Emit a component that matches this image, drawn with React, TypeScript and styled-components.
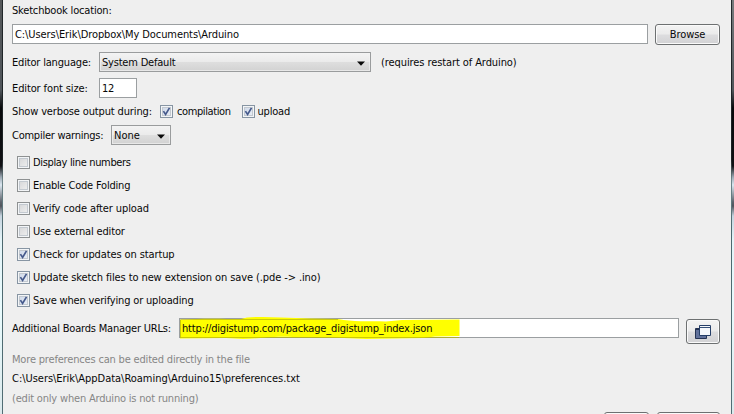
import React from 'react';
import styled, { createGlobalStyle } from 'styled-components';

const GlobalStyle = createGlobalStyle`
  *, *::before, *::after { box-sizing: border-box; }
  body { margin: 0; overflow: hidden; background: #efefef; }
`;

const Frame = styled.div`
  display: grid;
  grid-template-columns: 3px 1fr 3px;
  width: 734px;
  height: 414px;
  overflow: hidden;
  font: 11px/14px "DejaVu Sans Condensed", "DejaVu Sans", Tahoma, sans-serif;
  color: #080808;
`;

const glass = (top: string) => `linear-gradient(180deg,
  ${top} 0, #50555a 90px, #08090b 108px, #101114 166px,
  #9ba7b2 177px, #dce7f0 185px, #5c626b 202px, #50545c 206px,
  #c6d4df 216px, #e4f4f8 240px, #e9fbfd 310px, #dce9ec 414px)`;

const WindowEdge = styled.div<{ $side: 'left' | 'right' }>`
  background: ${(p) => glass(p.$side === 'left' ? '#55585a' : '#777b7d')};
  ${(p) => (p.$side === 'left' ? 'border-right' : 'border-left')}: 1px solid;
  border-image: linear-gradient(#22282b, #1b2022 160px, #6f858a 180px, #4c686e 230px, #526e75) 1;
  border-top: 0;
  border-bottom: 0;
`;

const Panel = styled.main`
  display: flex;
  flex-direction: column;
  min-width: 0;
  background: #efefef;
  padding: 0 11px 0 9px;
`;

const Row = styled.div<{ $height: number; $gap?: number }>`
  display: flex;
  flex: none;
  align-items: center;
  height: ${(p) => p.$height}px;
  gap: ${(p) => p.$gap ?? 0}px;
`;

const Text = styled.span<{ $track?: number; $muted?: boolean }>`
  flex: none;
  padding-top: 1px;
  white-space: pre;
  letter-spacing: ${(p) => p.$track ?? 0}px;
  color: ${(p) => (p.$muted ? '#868686' : 'inherit')};
`;

const Caption = styled(Text)<{ $width: number }>`
  width: ${(p) => p.$width}px;
`;

const Field = styled.div<{ $width: number }>`
  display: flex;
  flex: none;
  align-items: center;
  width: ${(p) => p.$width}px;
  height: 20px;
  padding-left: 2px;
  border: 1px solid #9b9fa1;
  background: #fff;
`;

const Select = styled.div<{ $width: number }>`
  display: flex;
  flex: none;
  align-items: center;
  justify-content: space-between;
  width: ${(p) => p.$width}px;
  height: 20px;
  padding: 0 5px 0 2px;
  border: 1px solid #9a9c9d;
  background: linear-gradient(#f3f3f3, #ebebeb 48%, #dedede 52%, #d2d2d2);
  box-shadow: inset 0 0 0 1px #f3f3f3aa;
  & > svg { margin-top: 3px; }
`;

const Button = styled.div<{ $width: number; $height: number }>`
  display: flex;
  flex: none;
  align-items: center;
  justify-content: center;
  width: ${(p) => p.$width}px;
  height: ${(p) => p.$height}px;
  border: 1px solid #6d7071;
  border-radius: 3px;
  background: linear-gradient(#f3f3f3, #ebebeb 48%, #dddddf 52%, #d2d2d4);
  box-shadow: inset 0 0 0 1px #fafafa;
`;

const Check = styled.label<{ $gap?: number }>`
  display: flex;
  align-items: center;
  gap: ${(p) => p.$gap ?? 3}px;
`;

const Box = styled.span<{ $checked: boolean }>`
  display: flex;
  flex: none;
  width: 13px;
  height: 13px;
  border: 1px solid ${(p) => (p.$checked ? '#8795a3' : '#8e9192')};
  box-shadow: inset 0 0 0 1px #f3f5f7, inset 0 0 0 2px #c3c9d0;
  background: ${(p) =>
    p.$checked
      ? 'linear-gradient(135deg, #cbd6e8, #edf1f7)'
      : 'linear-gradient(135deg, #d2d3d5, #f2f2f2)'};
`;

const CheckList = styled.div`
  display: flex;
  flex-direction: column;
  margin-top: 4px;
  padding-left: 5px;
`;

const UrlRow = styled.div`
  display: flex;
  flex: none;
  height: 37px;
  padding-top: 6px;
  & > ${Caption} { padding-top: 4px; }
`;

const UrlField = styled(Field)`
  position: relative;
  margin-right: 7px;
`;

const Marker = styled.svg`
  position: absolute;
  left: -2px;
  top: -3px;
  overflow: visible;
`;

const UrlText = styled(Text)`
  z-index: 1;
`;

const IconButton = styled(Button)`
  margin-top: 1px;
`;

const Note = styled(Text)`
  padding-left: 10px;
`;

const Footer = styled.div`
  display: flex;
  justify-content: flex-end;
  gap: 8px;
  margin-top: 4px;
  flex: none;
`;

const Arrow = () => (
  <svg width="8" height="5" viewBox="0 0 8 5">
    <path d="M0 .5h8L4 4.7z" fill="#090909" />
  </svg>
);

const Windows = () => (
  <svg width="16" height="14" viewBox="0 0 16 14">
    <path d="M.5 3.5h11v10H.5z" fill="#61719b" stroke="#263454" />
    <path d="M1 4.5h3" stroke="#263454" />
    <path d="M4.5.5h11v10h-11z" fill="#f6f8fb" stroke="#263f68" />
    <path d="M5 2.5h10" stroke="#365078" />
  </svg>
);

function CheckBox({ label, track, checked = false, gap }: {
  label: string; track: number; checked?: boolean; gap?: number;
}) {
  return (
    <Check $gap={gap}>
      <Box $checked={checked}>
        {checked && (
          <svg width="11" height="11" viewBox="0 0 11 11">
            <path d="M2.4 5.1 4.6 8.5 8.5 1.9" fill="none" stroke="#465a8c" strokeWidth="1.7" />
          </svg>
        )}
      </Box>
      <Text $track={track}>{label}</Text>
    </Check>
  );
}

const options = [
  { label: 'Display line numbers', track: -0.34 },
  { label: 'Enable Code Folding', track: -0.2 },
  { label: 'Verify code after upload', track: -0.1 },
  { label: 'Use external editor', track: -0.15 },
  { label: 'Check for updates on startup', track: -0.11, checked: true },
  { label: 'Update sketch files to new extension on save (.pde -> .ino)', track: -0.1, checked: true },
  { label: 'Save when verifying or uploading', track: -0.17, checked: true },
];

export default function App() {
  return (
    <>
      <GlobalStyle />
      <Frame>
        <WindowEdge $side="left" />
        <Panel>
          <Row $height={20}>
            <Text $track={-0.18}>Sketchbook location:</Text>
          </Row>
          <Row $height={28} $gap={7}>
            <Field $width={636}>
              <Text $track={-0.08}>{'C:\\Users\\Erik\\Dropbox\\My Documents\\Arduino'}</Text>
            </Field>
            <Button $width={65} $height={21}>
              <Text $track={-0.05}>Browse</Text>
            </Button>
          </Row>
          <Row $height={28}>
            <Caption $width={87} $track={-0.18}>Editor language:</Caption>
            <Select $width={272}>
              <Text $track={-0.2}>System Default</Text>
              <Arrow />
            </Select>
            <Note $track={-0.09}>(requires restart of Arduino)</Note>
          </Row>
          <Row $height={24}>
            <Caption $width={87} $track={-0.12}>Editor font size:</Caption>
            <Field $width={38}>
              <Text $track={-0.3}>12</Text>
            </Field>
          </Row>
          <Row $height={23}>
            <Caption $width={148} $track={-0.14}>Show verbose output during:</Caption>
            <Row $height={23} $gap={11}>
              <CheckBox label="compilation" track={-0.4} gap={4} checked />
              <CheckBox label="upload" track={-0.2} checked />
            </Row>
          </Row>
          <Row $height={24}>
            <Caption $width={99} $track={-0.25}>Compiler warnings:</Caption>
            <Select $width={60}>
              <Text>None</Text>
              <Arrow />
            </Select>
          </Row>
          <CheckList>
            {options.map((o) => (
              <Row key={o.label} $height={23}>
                <CheckBox {...o} />
              </Row>
            ))}
          </CheckList>
          <UrlRow>
            <Caption $width={167} $track={-0.19}>Additional Boards Manager URLs:</Caption>
            <UrlField $width={500}>
              <Marker width="283" height="25" viewBox="0 0 283 25">
                <path
                  d="M2 4 C24 2 45 3 63 3 L69 1.5 C78 .8 91 .8 103 1.5 L132 2.5 160 3 C175 6 190 5 208 5.5 L224 4 281.5 3.5 V20 L257 20.5 245 22 188 23 155 21.5 115 21 C90 20 80 23 65 23 L48 22 2 22.5Z"
                  fill="#ffff00"
                />
                <path d="M2.5 21.5V3.5H160 M2 21.5H281" fill="none" stroke="#b5b20a" strokeWidth=".7" />
              </Marker>
              <UrlText $track={-0.17}>http://digistump.com/package_digistump_index.json</UrlText>
            </UrlField>
            <IconButton $width={34} $height={25}>
              <Windows />
            </IconButton>
          </UrlRow>
          <Row $height={20}>
            <Text $muted $track={-0.18}>More preferences can be edited directly in the file</Text>
          </Row>
          <Row $height={19}>
            <Text $track={-0.03}>{'C:\\Users\\Erik\\AppData\\Roaming\\Arduino15\\preferences.txt'}</Text>
          </Row>
          <Row $height={20}>
            <Text $muted $track={-0.19}>(edit only when Arduino is not running)</Text>
          </Row>
          <Footer>
            <Button $width={45} $height={21} />
            <Button $width={63} $height={21} />
          </Footer>
        </Panel>
        <WindowEdge $side="right" />
      </Frame>
    </>
  );
}
